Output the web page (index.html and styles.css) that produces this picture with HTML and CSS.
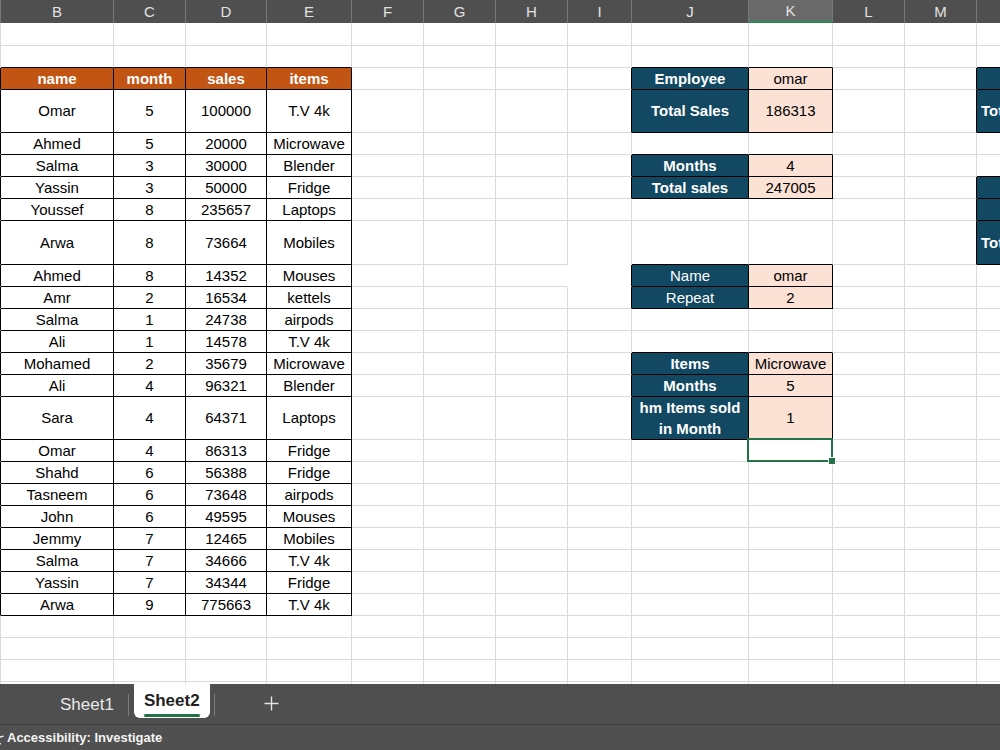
FILE: index.html
```html
<!DOCTYPE html>
<html lang="en">
<head>
    <meta charset="UTF-8">
    <title>Sheet2</title>
    <link rel="stylesheet" href="styles.css">
</head>
<body>
    <div class="sheet">
        <table class="grid">
            <colgroup>
                <col class="c-a"><col class="c-b"><col class="c-c"><col class="c-d"><col class="c-e"><col class="c-f"><col class="c-g">
                <col class="c-h"><col class="c-i"><col class="c-j"><col class="c-k"><col class="c-l"><col class="c-m"><col class="c-n">
            </colgroup>
            <thead>
                <tr>
                    <th></th><th>B</th><th>C</th><th>D</th><th>E</th><th>F</th><th>G</th>
                    <th>H</th><th>I</th><th>J</th><th class="active">K</th><th>L</th><th>M</th><th></th>
                </tr>
            </thead>
            <tbody>
                <tr class="first">
                    <td></td><td></td><td></td><td></td><td></td><td></td><td></td>
                    <td></td><td></td><td></td><td></td><td></td><td></td><td></td>
                </tr>
                <tr>
                    <td></td><td class="xb"></td><td class="xb"></td><td class="xb"></td><td class="xb"></td><td></td><td></td>
                    <td></td><td></td><td class="xb"></td><td class="xb"></td><td></td><td></td><td class="xb"></td>
                </tr>
                <tr>
                    <td class="xr"></td><td class="x th">name</td><td class="x th">month</td><td class="x th">sales</td><td class="x th">items</td><td></td><td></td>
                    <td></td><td class="xr"></td><td class="x hd">Employee</td><td class="x val">omar</td><td></td><td class="xr"></td><td class="x hd"></td>
                </tr>
                <tr class="tall">
                    <td class="xr"></td><td class="x">Omar</td><td class="x">5</td><td class="x">100000</td><td class="x">T.V 4k</td><td></td><td></td>
                    <td></td><td class="xr"></td><td class="x hd">Total Sales</td><td class="x val">186313</td><td></td><td class="xr"></td><td class="x hd cut">Total</td>
                </tr>
                <tr>
                    <td class="xr"></td><td class="x">Ahmed</td><td class="x">5</td><td class="x">20000</td><td class="x">Microwave</td><td></td><td></td>
                    <td></td><td></td><td class="xb"></td><td class="xb"></td><td></td><td></td><td></td>
                </tr>
                <tr>
                    <td class="xr"></td><td class="x">Salma</td><td class="x">3</td><td class="x">30000</td><td class="x">Blender</td><td></td><td></td>
                    <td></td><td class="xr"></td><td class="x hd">Months</td><td class="x val">4</td><td></td><td></td><td class="xb"></td>
                </tr>
                <tr>
                    <td class="xr"></td><td class="x">Yassin</td><td class="x">3</td><td class="x">50000</td><td class="x">Fridge</td><td></td><td></td>
                    <td></td><td class="xr"></td><td class="x hd">Total sales</td><td class="x val">247005</td><td></td><td class="xr"></td><td class="x hd"></td>
                </tr>
                <tr>
                    <td class="xr"></td><td class="x">Youssef</td><td class="x">8</td><td class="x">235657</td><td class="x">Laptops</td><td></td><td></td>
                    <td></td><td></td><td></td><td></td><td></td><td class="xr"></td><td class="x hd"></td>
                </tr>
                <tr class="tall wide">
                    <td class="xr"></td><td class="x">Arwa</td><td class="x">8</td><td class="x">73664</td><td class="x">Mobiles</td><td></td><td></td>
                    <td></td><td class="wb"></td><td class="xb"></td><td class="xb"></td><td></td><td class="xr"></td><td class="x hd cut">Total</td>
                </tr>
                <tr>
                    <td class="xr"></td><td class="x">Ahmed</td><td class="x">8</td><td class="x">14352</td><td class="x">Mouses</td><td></td><td></td>
                    <td class="wr"></td><td class="wb xr"></td><td class="x hd plain">Name</td><td class="x val">omar</td><td></td><td></td><td></td>
                </tr>
                <tr>
                    <td class="xr"></td><td class="x">Amr</td><td class="x">2</td><td class="x">16534</td><td class="x">kettels</td><td></td><td></td>
                    <td></td><td class="xr"></td><td class="x hd plain">Repeat</td><td class="x val">2</td><td></td><td></td><td></td>
                </tr>
                <tr>
                    <td class="xr"></td><td class="x">Salma</td><td class="x">1</td><td class="x">24738</td><td class="x">airpods</td><td></td><td></td>
                    <td></td><td></td><td></td><td></td><td></td><td></td><td></td>
                </tr>
                <tr>
                    <td class="xr"></td><td class="x">Ali</td><td class="x">1</td><td class="x">14578</td><td class="x">T.V 4k</td><td></td><td></td>
                    <td></td><td></td><td class="xb"></td><td class="xb"></td><td></td><td></td><td></td>
                </tr>
                <tr>
                    <td class="xr"></td><td class="x">Mohamed</td><td class="x">2</td><td class="x">35679</td><td class="x">Microwave</td><td></td><td></td>
                    <td></td><td class="xr"></td><td class="x hd">Items</td><td class="x val">Microwave</td><td></td><td></td><td></td>
                </tr>
                <tr>
                    <td class="xr"></td><td class="x">Ali</td><td class="x">4</td><td class="x">96321</td><td class="x">Blender</td><td></td><td></td>
                    <td></td><td class="xr"></td><td class="x hd">Months</td><td class="x val">5</td><td></td><td></td><td></td>
                </tr>
                <tr class="tall">
                    <td class="xr"></td><td class="x">Sara</td><td class="x">4</td><td class="x">64371</td><td class="x">Laptops</td><td></td><td></td>
                    <td></td><td class="xr"></td><td class="x hd wrap">hm Items sold in Month</td><td class="x val">1</td><td></td><td></td><td></td>
                </tr>
                <tr>
                    <td class="xr"></td><td class="x">Omar</td><td class="x">4</td><td class="x">86313</td><td class="x">Fridge</td><td></td><td></td>
                    <td></td><td></td><td></td><td class="sel"></td><td></td><td></td><td></td>
                </tr>
                <tr>
                    <td class="xr"></td><td class="x">Shahd</td><td class="x">6</td><td class="x">56388</td><td class="x">Fridge</td><td></td><td></td>
                    <td></td><td></td><td></td><td></td><td></td><td></td><td></td>
                </tr>
                <tr>
                    <td class="xr"></td><td class="x">Tasneem</td><td class="x">6</td><td class="x">73648</td><td class="x">airpods</td><td></td><td></td>
                    <td></td><td></td><td></td><td></td><td></td><td></td><td></td>
                </tr>
                <tr>
                    <td class="xr"></td><td class="x">John</td><td class="x">6</td><td class="x">49595</td><td class="x">Mouses</td><td></td><td></td>
                    <td></td><td></td><td></td><td></td><td></td><td></td><td></td>
                </tr>
                <tr>
                    <td class="xr"></td><td class="x">Jemmy</td><td class="x">7</td><td class="x">12465</td><td class="x">Mobiles</td><td></td><td></td>
                    <td></td><td></td><td></td><td></td><td></td><td></td><td></td>
                </tr>
                <tr>
                    <td class="xr"></td><td class="x">Salma</td><td class="x">7</td><td class="x">34666</td><td class="x">T.V 4k</td><td></td><td></td>
                    <td></td><td></td><td></td><td></td><td></td><td></td><td></td>
                </tr>
                <tr>
                    <td class="xr"></td><td class="x">Yassin</td><td class="x">7</td><td class="x">34344</td><td class="x">Fridge</td><td></td><td></td>
                    <td></td><td></td><td></td><td></td><td></td><td></td><td></td>
                </tr>
                <tr>
                    <td class="xr"></td><td class="x">Arwa</td><td class="x">9</td><td class="x">775663</td><td class="x">T.V 4k</td><td></td><td></td>
                    <td></td><td></td><td></td><td></td><td></td><td></td><td></td>
                </tr>
                <tr>
                    <td></td><td></td><td></td><td></td><td></td><td></td><td></td>
                    <td></td><td></td><td></td><td></td><td></td><td></td><td></td>
                </tr>
                <tr>
                    <td></td><td></td><td></td><td></td><td></td><td></td><td></td>
                    <td></td><td></td><td></td><td></td><td></td><td></td><td></td>
                </tr>
                <tr>
                    <td></td><td></td><td></td><td></td><td></td><td></td><td></td>
                    <td></td><td></td><td></td><td></td><td></td><td></td><td></td>
                </tr>
                <tr>
                    <td></td><td></td><td></td><td></td><td></td><td></td><td></td>
                    <td></td><td></td><td></td><td></td><td></td><td></td><td></td>
                </tr>
            </tbody>
        </table>
    </div>

    <div class="tabbar">
        <span class="tab">Sheet1</span>
        <span class="tab-sep"></span>
        <span class="tab tab-active">Sheet2</span>
        <span class="tab-sep"></span>
        <svg class="tab-add" width="15" height="15" viewBox="0 0 15 15">
            <path d="M7.5 0.5v14M0.5 7.5h14" stroke="#e4e4e4" stroke-width="1.4" fill="none"/>
        </svg>
    </div>

    <div class="statusbar">
        <svg class="status-icon" width="14" height="14" viewBox="0 0 14 14">
            <circle cx="7" cy="2.5" r="1.6" fill="#f2f2f2"/>
            <path d="M1.5 5.2l5.5 1.2 5.5-1.2M7 6.4v3M7 9.4l-2.5 4M7 9.4l2.5 4" stroke="#f2f2f2" stroke-width="1.3" fill="none"/>
        </svg>
        <span class="status-text">Accessibility: Investigate</span>
    </div>
</body>
</html>
```

FILE: styles.css
```css
/* Base */
* {
    margin: 0;
    padding: 0;
    box-sizing: border-box;
}

body {
    width: 1000px;
    height: 750px;
    overflow: hidden;
    font-family: "Liberation Sans", Arial, sans-serif;
    background-color: #ffffff;
    color: #000000;
    display: flex;
    flex-direction: column;
}

/* Sheet grid */
.sheet {
    height: 684px;
    flex: none;
    overflow: hidden;
}

.grid {
    border-collapse: separate;
    border-spacing: 0;
    table-layout: fixed;
    width: 1057px;
    margin-left: -20px;
    font-size: 15px;
}

.c-a { width: 21px; }
.c-b { width: 113px; }
.c-c { width: 72px; }
.c-d { width: 81px; }
.c-e { width: 85px; }
.c-f { width: 72px; }
.c-g { width: 72px; }
.c-h { width: 72px; }
.c-i { width: 64px; }
.c-j { width: 117px; }
.c-k { width: 84px; }
.c-l { width: 72px; }
.c-m { width: 72px; }
.c-n { width: 60px; }

.grid th {
    height: 23px;
    background-color: #4f4f4f;
    color: #e2e2e2;
    font-weight: 400;
    font-size: 15px;
    border-right: 1px solid #777777;
}

.grid th.active {
    background-color: #6a6a6a;
    border-bottom: 2px solid #2b8a57;
}

.grid tr {
    height: 22px;
}

.grid tr.first {
    height: 23px;
}

.grid tr.tall {
    height: 43px;
}

.grid tr.wide {
    height: 44px;
}

.grid td {
    padding: 0;
    text-align: center;
    vertical-align: middle;
    line-height: 20px;
    white-space: nowrap;
    overflow: hidden;
    border-right: 1px solid #dadada;
    border-bottom: 1px solid #dadada;
}

/* Black cell borders */
.grid td.x {
    border-right-color: #000000;
    border-bottom-color: #000000;
}

.grid td.xr {
    border-right-color: #000000;
}

.grid td.xb {
    border-bottom-color: #000000;
}

/* White fill hides gridlines */
.grid td.wr {
    border-right-color: #ffffff;
}

.grid td.wb {
    border-bottom-color: #ffffff;
}

/* Cell formats */
.grid td.th {
    background-color: #c25414;
    color: #ffffff;
    font-weight: 700;
}

.grid td.hd {
    background-color: #124862;
    color: #ffffff;
    font-weight: 700;
}

.grid td.hd.plain {
    font-weight: 400;
}

.grid td.hd.wrap {
    white-space: normal;
    line-height: 21px;
}

.grid td.cut {
    text-align: left;
    padding-left: 4px;
}

.grid td.val {
    background-color: #fbe2d5;
}

/* Selected cell */
.grid td.sel {
    position: relative;
    overflow: visible;
}

.grid td.sel::after {
    content: "";
    position: absolute;
    left: -2px;
    top: -2px;
    right: -1px;
    bottom: -1px;
    border: 2px solid #217346;
}

.grid td.sel::before {
    content: "";
    position: absolute;
    right: -4px;
    bottom: -4px;
    width: 6px;
    height: 6px;
    background-color: #217346;
    border: 1px solid #ffffff;
    z-index: 1;
}

/* Sheet tabs */
.tabbar {
    height: 40px;
    flex: none;
    background-color: #4f4f4f;
    display: flex;
    align-items: flex-start;
    padding-left: 60px;
}

.tab {
    font-size: 17px;
    color: #e8e8e8;
    line-height: 20px;
    margin-top: 11px;
}

.tab-sep {
    width: 1px;
    height: 22px;
    margin-top: 10px;
    margin-left: 14px;
    margin-right: 5px;
    background-color: #7c7c7c;
}

.tab-active {
    margin-top: 0;
    height: 34px;
    padding: 7px 10px 0;
    background-color: #ffffff;
    color: #1f1f1f;
    font-weight: 700;
    border-radius: 0 0 6px 6px;
}

.tab-active::after {
    content: "";
    display: block;
    margin-top: 3px;
    height: 3px;
    border-radius: 2px;
    background-color: #217346;
}

.tab-active + .tab-sep {
    margin-left: 4px;
}

.tab-add {
    margin-left: 44px;
    margin-top: 12px;
}

/* Status bar */
.statusbar {
    flex: 1;
    background-color: #505050;
    border-top: 1px solid #3a3a3a;
    display: flex;
    align-items: center;
    gap: 2px;
}

.status-icon {
    margin-left: -9px;
}

.status-text {
    font-size: 13px;
    font-weight: 700;
    color: #f4f4f4;
}
```
